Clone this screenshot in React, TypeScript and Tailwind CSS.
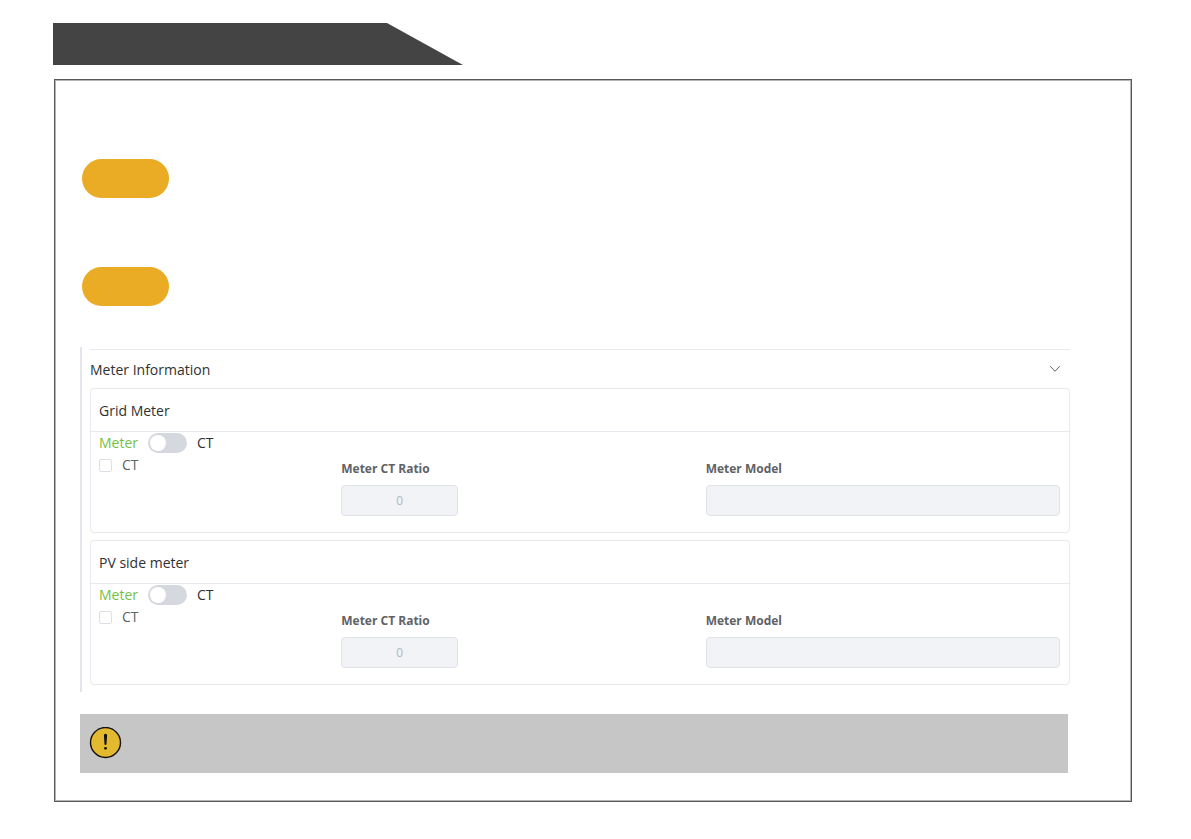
import { useState } from "react";

type MeterCardProps = {
  id: string;
  title: string;
};

function MeterCard({ id, title }: MeterCardProps) {
  const [useCt, setUseCt] = useState(false);
  const [ctEnabled, setCtEnabled] = useState(false);

  return (
    <section className="rounded border border-[#e8e9ee]">
      <h3 className="flex h-[43px] items-center border-b border-[#e8e9ee] px-2 text-[14px] text-[#303133]">
        {title}
      </h3>

      <div className="grid h-[100px] grid-cols-[242fr_364fr_354fr] pr-[9px] pl-2">
        <div className="text-[14px] leading-[22px]">
          <div className="flex h-[22px] items-center">
            <span className={`w-[39px] ${useCt ? "text-[#303133]" : "text-[#75bf43]"}`}>Meter</span>
            <button
              type="button"
              role="switch"
              aria-checked={useCt}
              aria-label={`${title} source`}
              onClick={() => setUseCt(!useCt)}
              className={`mx-[10px] flex h-5 w-[39px] items-center rounded-full px-0.5 ${
                useCt ? "justify-end bg-[#75bf43]" : "bg-[#d6d8e0]"
              }`}
            >
              <span className="size-4 rounded-full bg-white"></span>
            </button>
            <span className={useCt ? "text-[#75bf43]" : "text-[#303133]"}>CT</span>
          </div>
          <label className="flex h-[22px] w-fit items-center gap-[10px] text-[#606266]">
            <input
              type="checkbox"
              checked={ctEnabled}
              onChange={(e) => setCtEnabled(e.target.checked)}
              className="size-[13px] appearance-none rounded-xs border border-[#dcdfe6] bg-white checked:bg-[#75bf43]"
            />
            CT
          </label>
        </div>

        <div className="flex flex-col gap-[6px] pt-[27px]">
          <label htmlFor={`${id}-ratio`} className="text-[12px] leading-5 font-bold text-[#606266]">
            Meter CT Ratio
          </label>
          <input
            id={`${id}-ratio`}
            type="text"
            defaultValue="0"
            disabled
            className="h-[31px] w-[117px] rounded border border-[#dfe2e8] bg-[#f1f3f7] text-center text-[12px] text-[#b4b7be]"
          />
        </div>

        <div className="flex flex-col gap-[6px] pt-[27px]">
          <label htmlFor={`${id}-model`} className="text-[12px] leading-5 font-bold text-[#606266]">
            Meter Model
          </label>
          <input
            id={`${id}-model`}
            type="text"
            disabled
            className="h-[31px] w-full rounded border border-[#dfe2e8] bg-[#f1f3f7] px-3 text-[12px]"
          />
        </div>
      </div>
    </section>
  );
}

export default function App() {
  const [open, setOpen] = useState(true);

  return (
    <div className="min-h-screen bg-white pt-[23px] pr-[59px] pb-9 pl-[53px] font-['Open_Sans','Noto_Sans',sans-serif]">
      {/* Section banner */}
      <header className="h-[42px] w-[410px] bg-[#444444] [clip-path:polygon(0_0,334px_0,100%_100%,0_100%)]"></header>

      <main className="mt-[14px] ml-px border border-[#58585a] pr-[61px] pb-[28px] pl-[25px] shadow-[inset_0_0_0_1px_#b4b4b4]">
        {/* Steps */}
        <div className="ml-0.5 flex flex-col gap-[69px] pt-[79px]">
          <div className="h-[39px] w-[87px] rounded-full bg-[#eaab25]"></div>
          <div className="h-[39px] w-[87px] rounded-full bg-[#eaab25]"></div>
        </div>

        {/* Meter settings */}
        <div className="mt-[41px] border-l-2 border-[#e4e5ec] pt-0.5 pb-[7px] pl-2">
          <button
            type="button"
            aria-expanded={open}
            onClick={() => setOpen(!open)}
            className="flex h-[39px] w-full items-center justify-between border-t border-[#e8e9ee] pr-[10px] text-[14px] text-[#303133]"
          >
            Meter Information
            <svg
              className={open ? "" : "-rotate-90"}
              width="10"
              height="6"
              viewBox="0 0 10 6"
              fill="none"
              stroke="#606266"
              strokeLinecap="round"
              strokeLinejoin="round"
            >
              <path d="M.5.5 5 5.3 9.5.5" />
            </svg>
          </button>
          {open && (
            <div className="flex flex-col gap-[7px]">
              <MeterCard id="grid" title="Grid Meter" />
              <MeterCard id="pv" title="PV side meter" />
            </div>
          )}
        </div>

        {/* Warning note */}
        <div className="mt-[22px] mr-0.5 flex h-[59px] items-center bg-[#c6c6c6] px-[9px]">
          <svg width="33" height="33" viewBox="0 0 33 33" role="img" aria-label="Warning">
            <circle cx="16.5" cy="15.5" r="15" fill="#e3b92f" stroke="#111" strokeWidth="1.4" />
            <path d="M14.9 8.3a1.6 1.6 0 0 1 3.2 0l-.6 8.8a1 1 0 0 1-2 0z" fill="#111" />
            <circle cx="16.5" cy="21.3" r="1.4" fill="#111" />
          </svg>
        </div>
      </main>
    </div>
  );
}
